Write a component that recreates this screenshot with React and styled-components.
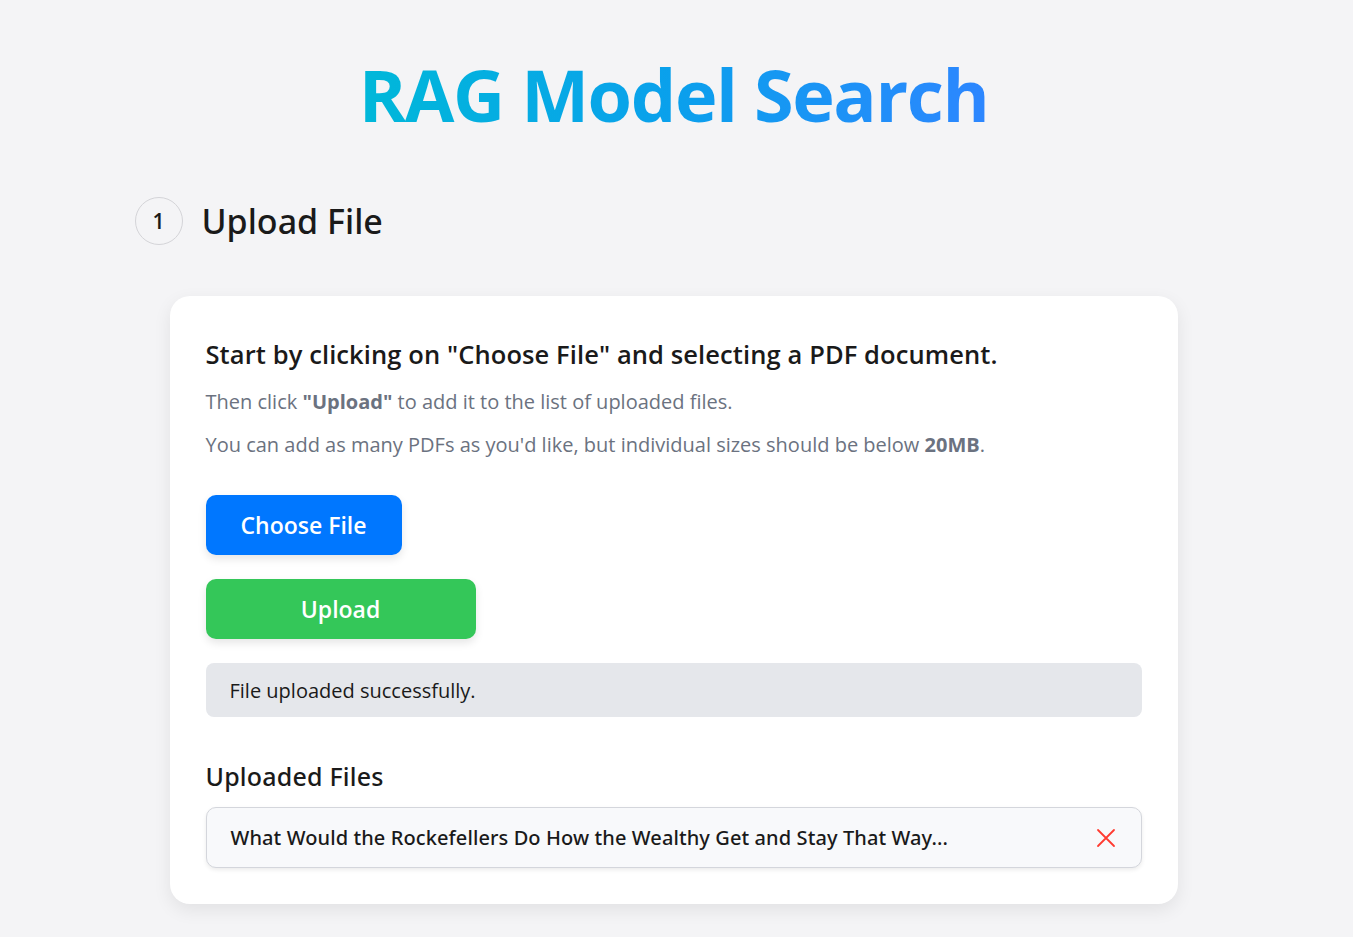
import React from 'react';
import styled, { createGlobalStyle } from 'styled-components';

const GlobalStyle = createGlobalStyle`
  body {
    margin: 0;
    background: #f4f4f6;
    font-family: "Open Sans", "Noto Sans", "Liberation Sans", sans-serif;
    color: #1a1a1a;
  }
`;

const files = ['What Would the Rockefellers Do How the Wealthy Get and Stay That Way...'];

const App = () => {
  return (
    <>
      <GlobalStyle />
      <Page>
        <Title>RAG Model Search</Title>
        <Step>
          <StepNumber>1</StepNumber>
          <StepTitle>Upload File</StepTitle>
        </Step>
        <Card>
          <Lead>Start by clicking on "Choose File" and selecting a PDF document.</Lead>
          <Hint>Then click <b>"Upload"</b> to add it to the list of uploaded files.</Hint>
          <Hint>You can add as many PDFs as you'd like, but individual sizes should be below <b>20MB</b>.</Hint>
          <Actions>
            <Button color="#0077ff" width="196px">Choose File</Button>
            <Button color="#34c759" width="270px">Upload</Button>
          </Actions>
          <Status>File uploaded successfully.</Status>
          <SubTitle>Uploaded Files</SubTitle>
          <FileList>
            {files.map((name) => (
              <FileItem key={name}>
                <FileName>{name}</FileName>
                <Remove aria-label="Remove">
                  <svg width="22" height="22" viewBox="0 0 22 22">
                    <path d="M3 3 L19 19 M19 3 L3 19" stroke="#ff3b30" strokeWidth="1.8" strokeLinecap="round" />
                  </svg>
                </Remove>
              </FileItem>
            ))}
          </FileList>
        </Card>
      </Page>
    </>
  );
};

const Page = styled.div`
  max-width: 1084px;
  margin: 0 auto;
  padding: 48px 0 40px;
`;

const Title = styled.h1`
  margin: 0 auto;
  width: fit-content;
  font-size: 72px;
  font-weight: 700;
  line-height: 92px;
  letter-spacing: -1.4px;
  transform: translateX(-3px);
  background: linear-gradient(90deg, #00b8d9 0%, #0aa0ec 50%, #2d86ff 100%);
  -webkit-background-clip: text;
  background-clip: text;
  color: transparent;
`;

const Step = styled.div`
  display: flex;
  align-items: center;
  gap: 19px;
  margin-top: 57px;
`;

const StepNumber = styled.div`
  width: 46px;
  height: 46px;
  border-radius: 50%;
  border: 1px solid #d4d4d8;
  display: flex;
  align-items: center;
  justify-content: center;
  font-size: 21px;
  font-weight: 600;
`;

const StepTitle = styled.h2`
  margin: 0;
  font-family: "Noto Sans", "Open Sans", sans-serif;
  font-size: 34px;
  font-weight: 500;
  letter-spacing: 0;
`;

const Card = styled.div`
  margin: 51px 0 0 35px;
  width: 1008px;
  box-sizing: border-box;
  padding: 36px 36px 36px;
  background: #fff;
  border-radius: 20px;
  box-shadow: 0 6px 18px rgba(0, 0, 0, 0.08);
`;

const Lead = styled.h3`
  margin: 5px 0 17px;
  font-size: 25.5px;
  font-weight: 600;
  letter-spacing: 0.1px;
`;

const Hint = styled.p`
  margin: 0 0 16px;
  font-size: 20px;
  color: #6b7280;
  b { font-weight: 700; }
`;

const Actions = styled.div`
  display: flex;
  flex-direction: column;
  align-items: flex-start;
  gap: 24px;
  margin-top: 37px;
`;

const Button = styled.button`
  width: ${(p) => p.width};
  height: 60px;
  border: none;
  border-radius: 10px;
  background: ${(p) => p.color};
  color: #fff;
  font-family: inherit;
  font-size: 23px;
  font-weight: 600;
  box-shadow: 0 4px 8px rgba(0, 0, 0, 0.1);
  cursor: pointer;
`;

const Status = styled.div`
  margin-top: 24px;
  height: 54px;
  display: flex;
  align-items: center;
  padding: 0 24px;
  border-radius: 8px;
  background: #e5e7eb;
  font-size: 20px;
`;

const SubTitle = styled.h4`
  margin: 42px 0 14px;
  font-family: "Noto Sans", "Open Sans", sans-serif;
  font-size: 25px;
  font-weight: 500;
  letter-spacing: 0.2px;
`;

const FileList = styled.div`
  display: flex;
  flex-direction: column;
  gap: 12px;
`;

const FileItem = styled.div`
  height: 61px;
  box-sizing: border-box;
  display: flex;
  align-items: center;
  justify-content: space-between;
  padding: 0 24px;
  background: #f8f9fb;
  border: 1px solid #d4d6dc;
  border-radius: 10px;
  box-shadow: 0 2px 4px rgba(0, 0, 0, 0.08);
`;

const FileName = styled.span`
  font-family: "Noto Sans", "Open Sans", sans-serif;
  font-size: 20px;
  font-weight: 500;
  letter-spacing: 0.1px;
`;

const Remove = styled.button`
  border: none;
  background: none;
  padding: 0;
  display: flex;
  cursor: pointer;
`;

export default App;
